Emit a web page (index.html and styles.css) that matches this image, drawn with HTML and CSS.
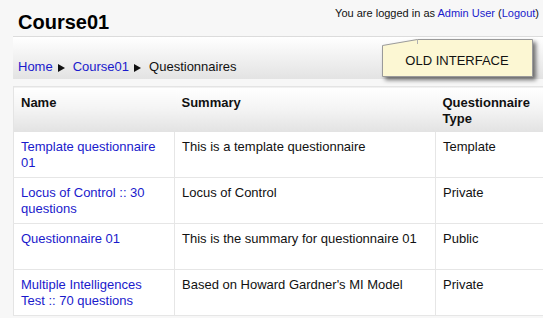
FILE: index.html
```html
<!DOCTYPE html>
<html lang="en">
<head>
    <meta charset="UTF-8">
    <title>Questionnaires</title>
    <link rel="stylesheet" href="styles.css">
</head>
<body>
    <div class="page">
        <div class="header">
            <h1 class="course-title">Course01</h1>
            <div class="login-info">You are logged in as <a href="#">Admin User</a> (<a href="#">Logout</a>)</div>
        </div>

        <div class="navbar">
            <div class="breadcrumb">
                <a href="#">Home</a><span class="sep"></span><a href="#">Course01</a><span class="sep"></span>Questionnaires
            </div>
            <div class="old-note">
                <svg class="note-shape" width="156" height="44" viewBox="0 0 156 44" xmlns="http://www.w3.org/2000/svg">
                    <polygon points="0.5,6.5 35.5,0.5 150.5,0.5 150.5,37.5 0.5,37.5" fill="#fcf7d3" stroke="#9a9a9a"/>
                    <line x1="35.5" y1="0.5" x2="35.5" y2="5" stroke="#b0b0b0"/>
                </svg>
                <span class="note-text">OLD INTERFACE</span>
            </div>
        </div>

        <table class="generaltable">
            <thead>
                <tr>
                    <th class="col-name">Name</th>
                    <th class="col-summary">Summary</th>
                    <th class="col-type">Questionnaire Type</th>
                </tr>
            </thead>
            <tbody>
                <tr>
                    <td><a href="#">Template questionnaire 01</a></td>
                    <td>This is a template questionnaire</td>
                    <td>Template</td>
                </tr>
                <tr>
                    <td><a href="#">Locus of Control :: 30 questions</a></td>
                    <td>Locus of Control</td>
                    <td>Private</td>
                </tr>
                <tr>
                    <td><a href="#">Questionnaire 01</a></td>
                    <td>This is the summary for questionnaire 01</td>
                    <td>Public</td>
                </tr>
                <tr>
                    <td><a href="#">Multiple Intelligences Test :: 70 questions</a></td>
                    <td>Based on Howard Gardner's MI Model</td>
                    <td>Private</td>
                </tr>
            </tbody>
        </table>
    </div>
</body>
</html>
```

FILE: styles.css
```css
* {
    margin: 0;
    padding: 0;
    box-sizing: border-box;
}

body {
    background: #f7f7f7;
    font-family: "Liberation Sans", Arial, sans-serif;
    font-size: 13px;
    color: #111;
    overflow: hidden;
}

a {
    color: #1a1acc;
    text-decoration: none;
}

.page {
    width: 543px;
    padding-left: 13px;
}

.header {
    display: flex;
    justify-content: space-between;
    height: 36px;
    padding-left: 5px;
    width: 526px;
}

.course-title {
    font-size: 20px;
    font-weight: bold;
    color: #000;
    padding-top: 11px;
    line-height: 22px;
}

.login-info {
    font-size: 11px;
    padding-top: 7px;
    color: #111;
}

.navbar {
    position: relative;
    height: 43px;
    border-top: 1px solid #dcdcdc;
    background: linear-gradient(to bottom, #ffffff 0%, #f2f2f2 45%, #e3e3e3 100%);
    padding: 22px 0 0 5px;
}

.breadcrumb {
    line-height: 16px;
}

/* breadcrumb arrow */
.sep {
    display: inline-block;
    width: 0;
    height: 0;
    border-left: 7px solid #111;
    border-top: 4px solid transparent;
    border-bottom: 4px solid transparent;
    margin: 0 8px 0 5px;
    vertical-align: -1px;
}

.old-note {
    position: absolute;
    left: 369px;
    top: 2px;
    width: 156px;
    height: 44px;
    z-index: 2;
}

.note-shape {
    display: block;
    filter: drop-shadow(3px 3px 2px rgba(0, 0, 0, 0.55));
}

.note-text {
    position: absolute;
    left: 0;
    top: 6px;
    width: 150px;
    line-height: 31px;
    text-align: center;
    font-size: 13px;
    color: #111;
}

.generaltable {
    margin-top: 7px;
    border-collapse: collapse;
    table-layout: fixed;
    width: 530px;
    background: #fff;
    border-left: 1px solid #e4e4e4;
    border-top: 1px solid #e4e4e4;
}

.generaltable th {
    text-align: left;
    vertical-align: top;
    font-weight: bold;
    height: 45px;
    line-height: 16px;
    padding: 8px 7px 0 7px;
    background: linear-gradient(to bottom, #ffffff 0%, #f3f3f3 50%, #e2e2e2 100%);
    color: #111;
}

.generaltable td {
    vertical-align: top;
    height: 46px;
    line-height: 16px;
    padding: 7px 7px 0 7px;
    border-bottom: 1px solid #e6e6e6;
    border-right: 1px solid #e6e6e6;
}

.col-name {
    width: 161px;
}

.col-summary {
    width: 261px;
}

.col-type {
    width: 108px;
}
```
